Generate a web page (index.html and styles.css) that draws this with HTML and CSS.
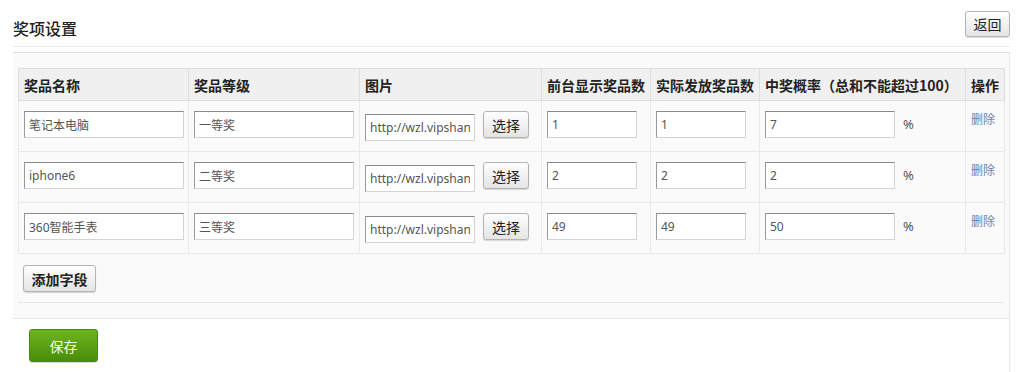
FILE: index.html
```html
<!DOCTYPE html>
<html lang="zh-CN">
<head>
  <meta charset="UTF-8" />
  <title>奖项设置</title>
  <link rel="stylesheet" href="styles.css">
</head>
<body>
  <div class="page">
    <div class="page-head">
      <h2 class="title">奖项设置</h2>
      <button class="btn btn-back" type="button">返回</button>
    </div>

    <div class="panel">
      <table class="prize-table">
        <colgroup>
          <col style="width:170px">
          <col style="width:171px">
          <col style="width:182px">
          <col style="width:109px">
          <col style="width:109px">
          <col style="width:206px">
          <col style="width:39px">
        </colgroup>
        <thead>
          <tr>
            <th>奖品名称</th>
            <th>奖品等级</th>
            <th>图片</th>
            <th>前台显示奖品数</th>
            <th>实际发放奖品数</th>
            <th>中奖概率（总和不能超过100）</th>
            <th>操作</th>
          </tr>
        </thead>
        <tbody>
          <tr>
            <td><input class="field field-lg" type="text" value="笔记本电脑"></td>
            <td><input class="field field-lg" type="text" value="一等奖"></td>
            <td>
              <div class="pic">
                <input class="field field-url" type="text" value="http://wzl.vipshang.com/upload/prize1.jpg">
                <button class="btn btn-pick" type="button">选择</button>
              </div>
            </td>
            <td><input class="field field-sm" type="text" value="1"></td>
            <td><input class="field field-sm" type="text" value="1"></td>
            <td>
              <div class="rate">
                <input class="field field-md" type="text" value="7">
                <span>%</span>
              </div>
            </td>
            <td><a class="del" href="#">删除</a></td>
          </tr>
          <tr>
            <td><input class="field field-lg" type="text" value="iphone6"></td>
            <td><input class="field field-lg" type="text" value="二等奖"></td>
            <td>
              <div class="pic">
                <input class="field field-url" type="text" value="http://wzl.vipshang.com/upload/prize2.jpg">
                <button class="btn btn-pick" type="button">选择</button>
              </div>
            </td>
            <td><input class="field field-sm" type="text" value="2"></td>
            <td><input class="field field-sm" type="text" value="2"></td>
            <td>
              <div class="rate">
                <input class="field field-md" type="text" value="2">
                <span>%</span>
              </div>
            </td>
            <td><a class="del" href="#">删除</a></td>
          </tr>
          <tr>
            <td><input class="field field-lg" type="text" value="360智能手表"></td>
            <td><input class="field field-lg" type="text" value="三等奖"></td>
            <td>
              <div class="pic">
                <input class="field field-url" type="text" value="http://wzl.vipshang.com/upload/prize3.jpg">
                <button class="btn btn-pick" type="button">选择</button>
              </div>
            </td>
            <td><input class="field field-sm" type="text" value="49"></td>
            <td><input class="field field-sm" type="text" value="49"></td>
            <td>
              <div class="rate">
                <input class="field field-md" type="text" value="50">
                <span>%</span>
              </div>
            </td>
            <td><a class="del" href="#">删除</a></td>
          </tr>
        </tbody>
      </table>

      <div class="add-row">
        <button class="btn btn-add" type="button">添加字段</button>
      </div>
    </div>

    <div class="form-foot">
      <button class="btn btn-save" type="button">保存</button>
    </div>
  </div>
</body>
</html>
```

FILE: styles.css
```css
* {
    margin: 0;
    padding: 0;
    box-sizing: border-box;
}
body {
    font-family: "Noto Sans", "Noto Sans CJK SC", sans-serif;
    font-size: 12px;
    color: #333;
    background: #fff;
}
.page {
    margin: 0 9px 0 13px;
}
.page-head {
    height: 47px;
    display: flex;
    justify-content: space-between;
    align-items: center;
    border-bottom: 1px solid #e8e8e8;
}
.title {
    font-family: "Noto Sans CJK SC", sans-serif;
    font-size: 16px;
    font-weight: 500;
    line-height: 26px;
    padding-top: 10px;
    color: #222;
}
.btn {
    font-family: "Noto Sans", "Noto Sans CJK SC", sans-serif;
    font-size: 14px;
    color: #222;
    background: linear-gradient(#ffffff, #e4e4e4);
    border: 1px solid #b3b3b3;
    border-radius: 3px;
    box-shadow: 0 1px 1px rgba(0,0,0,0.15);
    cursor: pointer;
}
.btn-back {
    width: 45px;
    height: 26px;
    margin-top: 2px;
}
.panel {
    margin-top: 5px;
    background: #fafafa;
    border-top: 1px solid #dcdcdc;
    border-right: 1px solid #e6e6e6;
    border-bottom: 1px solid #e6e6e6;
    padding: 15px 5px 15px 5px;
}
.prize-table {
    width: 100%;
    table-layout: fixed;
    border-collapse: collapse;
}
.prize-table th {
    height: 32px;
    background: #f0f0f0;
    border: 1px solid #dddddd;
    text-align: left;
    padding: 0 5px;
    font-family: "Noto Sans CJK SC", sans-serif;
    font-size: 14px;
    font-weight: bold;
    color: #222;
    white-space: nowrap;
}
.prize-table td {
    height: 51px;
    border: 1px solid #e8e8e8;
    vertical-align: top;
    padding: 10px 5px 0 5px;
}
.field {
    display: block;
    height: 27px;
    padding: 0 4px;
    font-family: "Noto Sans", "Noto Sans CJK SC", sans-serif;
    font-size: 12px;
    color: #555;
    background: #fff;
    border: 1px solid #d4d4d4;
    border-top-color: #8a8a8a;
    border-left-color: #9a9a9a;
    outline: none;
}
.field-lg {
    width: 160px;
}
.field-md {
    width: 130px;
}
.field-sm {
    width: 90px;
}
.field-url {
    width: 110px;
    margin-top: 3px;
}
.pic {
    display: flex;
    align-items: flex-start;
    gap: 8px;
}
.btn-pick {
    width: 46px;
    height: 27px;
}
.rate {
    display: flex;
    align-items: center;
    gap: 8px;
    font-size: 13px;
    color: #555;
}
.rate span {
    padding-bottom: 2px;
}
.del {
    display: block;
    line-height: 16px;
    padding-top: 1px;
    color: #6d7db0;
    text-decoration: none;
    white-space: nowrap;
}
.add-row {
    padding: 11px 5px 10px 5px;
    border-bottom: 1px solid #e6e6e6;
}
.btn-add {
    width: 73px;
    height: 27px;
    font-weight: bold;
}
.form-foot {
    margin-left: 11px;
    padding: 10px 5px;
    border-right: 1px solid #e6e6e6;
    border-bottom: 1px solid #e6e6e6;
}
.btn-save {
    display: block;
    width: 69px;
    height: 33px;
    color: #f4fbe8;
    background: linear-gradient(#6cb61c, #4a8c0a);
    border: 1px solid #478a0e;
    border-radius: 3px;
}
```
